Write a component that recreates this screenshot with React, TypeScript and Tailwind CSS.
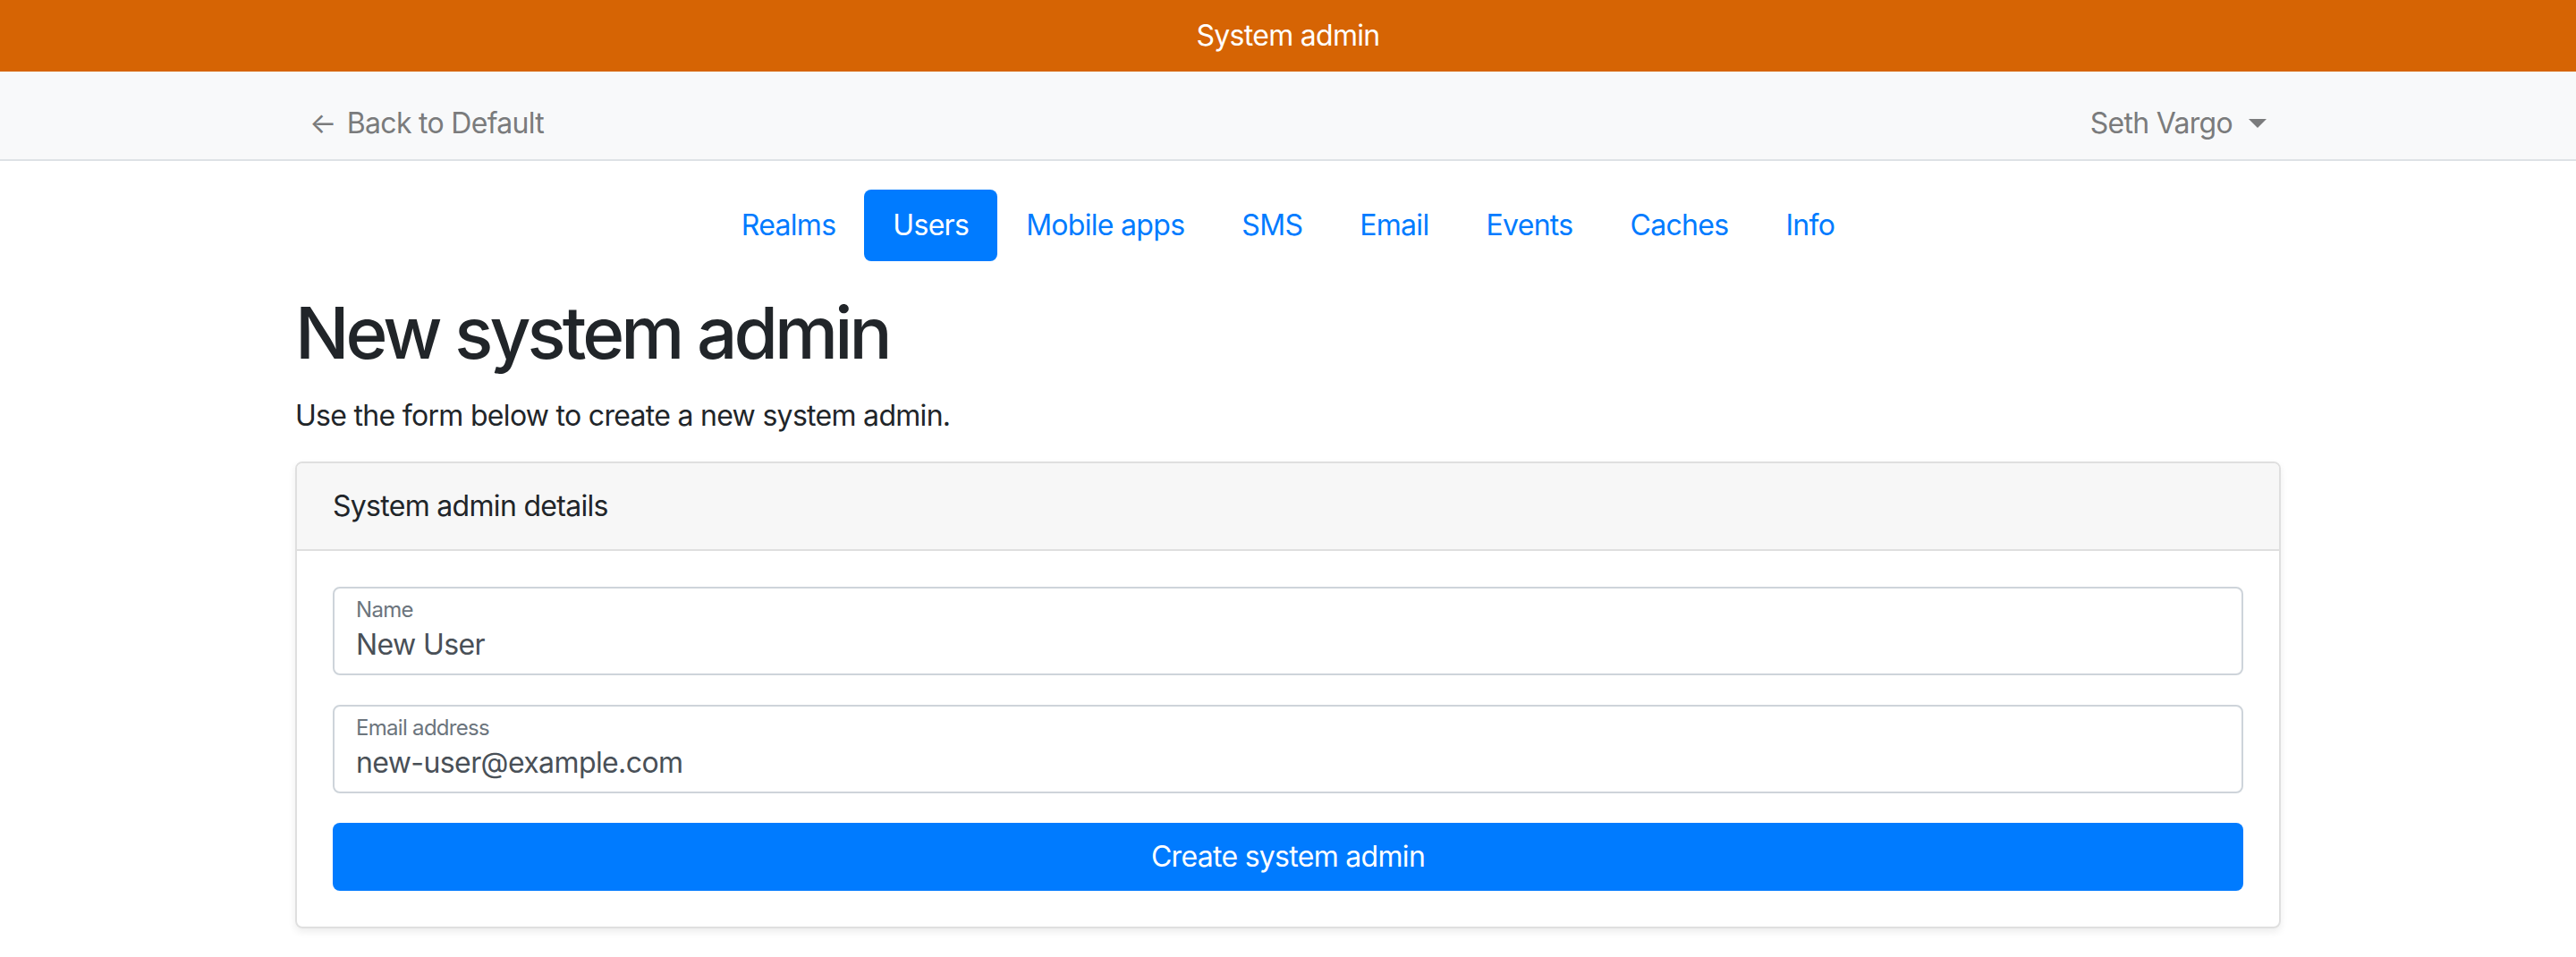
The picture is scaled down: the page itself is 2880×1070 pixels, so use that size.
import React from "react";

const tabs = ["Realms", "Users", "Mobile apps", "SMS", "Email", "Events", "Caches", "Info"];

const Field = ({ label, value }: { label: string; value: string }) => (
  <div className="border-2 border-[#ced4da] rounded-[8px] px-[24px] pt-[9px] pb-[8px] bg-white">
    <div className="text-[24px] leading-[30px] text-[#6c757d]">{label}</div>
    <input
      readOnly
      defaultValue={value}
      className="block w-full h-[48px] p-0 bg-transparent outline-none border-0 text-[32px] leading-[48px] tracking-[-0.6px] text-[#495057]"
    />
  </div>
);

export default function App() {
  return (
    <div className="min-h-screen bg-white text-[#212529] tracking-[-0.7px] font-['Inter','Liberation_Sans',sans-serif]">
      <div className="h-[80px] bg-[#d66404] flex items-center justify-center text-white text-[32px] leading-[48px]">
        System admin
      </div>

      <nav className="bg-[#f8f9fa] border-b-2 border-[#dee2e6] pt-[34px] pb-[16px]">
        <div className="w-[2220px] mx-auto flex items-center justify-between px-[16px] text-[32px] leading-[48px] text-[#7a7b7c]">
          <a href="#" className="flex items-center">
            <span className="mr-[12px]">←</span>
            <span>Back to Default</span>
          </a>
          <a href="#" className="flex items-center">
            <span>Seth Vargo</span>
            <span className="ml-[18px] w-0 h-0 border-x-[10px] border-x-transparent border-t-[10px] border-t-[#7a7b7c]" />
          </a>
        </div>
      </nav>

      <div className="w-[2220px] mx-auto">
        <ul className="flex justify-center mt-[32px]">
          {tabs.map((t) => (
            <li key={t}>
              <a
                href="#"
                className={
                  t === "Users"
                    ? "block px-[32px] py-[16px] text-[32px] leading-[48px] rounded-[8px] bg-[#007bff] text-white"
                    : "block px-[32px] py-[16px] text-[32px] leading-[48px] text-[#007bff]"
                }
              >
                {t}
              </a>
            </li>
          ))}
        </ul>

        <h1 className="mt-[32px] mb-[21px] text-[80px] leading-[96px] font-medium tracking-[-3.9px]">
          New system admin
        </h1>
        <p className="text-[32px] leading-[48px] mb-[27px]">
          Use the form below to create a new system admin.
        </p>

        <div className="border-2 border-[#dfdfdf] rounded-[8px] shadow-[0_4px_8px_rgba(0,0,0,0.075)] overflow-hidden">
          <div className="bg-[#f7f7f7] border-b-2 border-[#dfdfdf] px-[40px] py-[24px] text-[32px] leading-[48px]">
            System admin details
          </div>
          <div className="p-[40px] flex flex-col gap-[33px]">
            <Field label="Name" value="New User" />
            <Field label="Email address" value="new-user@example.com" />
            <button className="h-[76px] w-full rounded-[8px] bg-[#007bff] text-white text-[32px] leading-[48px]">
              Create system admin
            </button>
          </div>
        </div>
      </div>
    </div>
  );
}
